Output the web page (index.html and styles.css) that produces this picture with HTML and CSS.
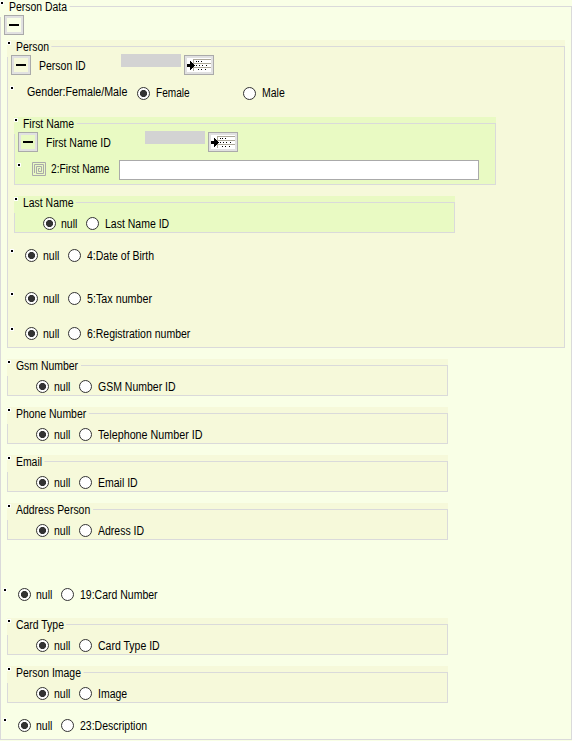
FILE: index.html
```html
<!DOCTYPE html>
<html lang="en">
<head>
<meta charset="utf-8">
<title>Person Data</title>
<link rel="stylesheet" href="styles.css">
</head>
<body>
<svg class="defs" width="0" height="0" aria-hidden="true">
  <symbol id="list" viewBox="0 0 30 20">
    <path d="M3 3H27V17H3Z" fill="#fff"/>
    <path d="M9.500 4V16M9 4.500H27M9 8.500H27M9 12.500H27" stroke="#aca899" fill="none"/>
    <path d="M12 6.500h1m1 0h1m2 0h1M12 10.500h1m2 0h1m2 0h1m3 0h1M14 14.500h1m2 0h1m3 0h1" stroke="#000" stroke-width="1.200"/>
    <path d="M3 9h3V6h1v1h1v1h1v1h1v1h1v1h-1v1h-1v1h-1v1h-1v1h-1v-3H3Z"/>
  </symbol>
</svg>
<main class="group root">
  <i class="dot"></i><h1 class="legend">Person Data</h1>
  <button class="toggle" aria-label="Collapse"></button>

  <section class="group person">
    <i class="dot"></i><h2 class="legend">Person</h2>
    <div class="head"><button class="toggle" aria-label="Collapse"></button><span class="t headtext">Person ID</span><span class="value"></span><button class="pick" aria-label="Pick"><svg width="30" height="20"><use href="#list"/></svg></button></div>
    <div class="gender"><i class="dot"></i><span class="t question">Gender:Female/Male</span><i class="radio on"></i><span class="t female">Female</span><i class="radio"></i><span class="t male">Male</span></div>

    <section class="group green first">
      <i class="dot"></i><h3 class="legend">First Name</h3>
      <div class="head"><button class="toggle" aria-label="Collapse"></button><span class="t headtext">First Name ID</span><span class="value"></span><button class="pick" aria-label="Pick"><svg width="30" height="20"><use href="#list"/></svg></button></div>
      <div class="entry"><i class="dot"></i>
        <svg class="spiral" width="14" height="14"><path d="M.5.5H13.500V13.500H.5ZM2.500 11V2.500H11.500V11.500H4.500V4.500H9.500V9.500H6.500V6.500H8" fill="none" stroke="#aaa"/></svg>
        <span class="t entrylabel">2:First Name</span><input class="field" aria-label="First Name"></div>
    </section>

    <section class="group green last">
      <i class="dot"></i><h3 class="legend">Last Name</h3>
      <div class="choice"><i class="radio on"></i><span class="t null">null</span><i class="radio"></i><span class="t name">Last Name ID</span></div>
    </section>

    <div class="choice item birth"><i class="dot"></i><i class="radio on"></i><span class="t null">null</span><i class="radio"></i><span class="t name">4:Date of Birth</span></div>
    <div class="choice item tax"><i class="dot"></i><i class="radio on"></i><span class="t null">null</span><i class="radio"></i><span class="t name">5:Tax number</span></div>
    <div class="choice item reg"><i class="dot"></i><i class="radio on"></i><span class="t null">null</span><i class="radio"></i><span class="t name">6:Registration number</span></div>
  </section>

  <section class="group small">
    <i class="dot"></i><h2 class="legend">Gsm Number</h2>
    <div class="choice"><i class="radio on"></i><span class="t null">null</span><i class="radio"></i><span class="t name">GSM Number ID</span></div>
  </section>
  <section class="group small">
    <i class="dot"></i><h2 class="legend">Phone Number</h2>
    <div class="choice"><i class="radio on"></i><span class="t null">null</span><i class="radio"></i><span class="t name wide">Telephone Number ID</span></div>
  </section>
  <section class="group small">
    <i class="dot"></i><h2 class="legend">Email</h2>
    <div class="choice"><i class="radio on"></i><span class="t null">null</span><i class="radio"></i><span class="t name">Email ID</span></div>
  </section>
  <section class="group small">
    <i class="dot"></i><h2 class="legend">Address Person</h2>
    <div class="choice"><i class="radio on"></i><span class="t null">null</span><i class="radio"></i><span class="t name">Adress ID</span></div>
  </section>
  <div class="choice item card"><i class="dot"></i><i class="radio on"></i><span class="t null">null</span><i class="radio"></i><span class="t name">19:Card Number</span></div>
  <section class="group small cardtype">
    <i class="dot"></i><h2 class="legend">Card Type</h2>
    <div class="choice"><i class="radio on"></i><span class="t null">null</span><i class="radio"></i><span class="t name">Card Type ID</span></div>
  </section>
  <section class="group small">
    <i class="dot"></i><h2 class="legend">Person Image</h2>
    <div class="choice"><i class="radio on"></i><span class="t null">null</span><i class="radio"></i><span class="t name">Image</span></div>
  </section>
  <div class="choice item desc"><i class="dot"></i><i class="radio on"></i><span class="t null">null</span><i class="radio"></i><span class="t name">23:Description</span></div>
</main>
</body>
</html>
```

FILE: styles.css
```css
* { box-sizing: border-box; }
body { margin: 0; height: 741px; background: #f9ffe6; color: #000; font: 12px/14px "Liberation Sans", Arial, sans-serif; overflow: hidden; }
.defs { position: absolute; }
h1, h2, h3 { margin: 0; font: inherit; }

/* Group frame: the top rule runs through the middle of the legend */
.group { position: relative; display: flow-root; --bg: #f6f9da; background: var(--bg); }
.group::before { content: ""; position: absolute; inset: 6px 0 0; border: 1px solid #dadada; pointer-events: none; }
.root { --bg: #f9ffe6; height: 740px; }
.legend { position: relative; width: fit-content; height: 17px; padding: 0 3px 0 10.300px; background: var(--bg); white-space: nowrap; transform: scaleX(.87); transform-origin: 0 0; }
.t { flex: none; display: block; white-space: nowrap; transform: scaleX(.875); transform-origin: 0 0; }
.dot { position: absolute; left: 1px; top: 2px; width: 2px; height: 2px; background: #000; box-shadow: 0 0 0 1px #fff; z-index: 1; }
.toggle { position: relative; display: block; flex: none; width: 20px; height: 20px; padding: 0; border: 1px solid #aaa; background: var(--bg); box-shadow: inset 0 0 0 2px #e1e1e1; }
.toggle::after { content: ""; position: absolute; left: 4px; top: 8px; width: 10px; height: 2px; background: #000; }
.root > .toggle { margin: -2px 0 0 4px; }

.person { width: 558px; height: 308px; margin: 5px 0 11px 7px; }
.head { position: relative; display: flex; height: 20px; margin: -2px 0 0 4px; }
.headtext { margin: 4px 0 0 8px; }
.value { width: 60px; height: 13px; background: #d3d3d3; margin: -1px 0 0 auto; }
.pick { flex: none; width: 30px; height: 20px; margin: 0 0 0 3px; padding: 0; border: 1px solid #aaa; background: #e1e1e1; }
.pick svg { display: block; margin: -1px; }
.person > .head { width: 203px; }
.first .head { width: 220px; }
.gender { position: relative; display: flex; align-items: center; height: 20px; margin-top: 8px; padding-left: 20px; }
.gender .dot { left: 4px; top: 4px; }
.question { width: 110px; margin-top: -3px; transform: scaleX(.89); }
.female { width: 87px; margin-left: 6px; transform: scaleX(.84); }
.male { margin-left: 6px; }
.radio { flex: none; width: 13px; height: 13px; border: 1px solid #333; border-radius: 50%; background: #fff; }
.on { background: radial-gradient(circle, #333 0 3.200px, #fff 3.900px); }

.green { --bg: #e9fac3; margin-left: 7px; }
.first { width: 482px; height: 68px; margin-top: 14px; }
.entry { position: relative; display: flex; align-items: center; height: 20px; margin-top: 8px; padding-left: 18px; }
.entry .dot { left: 4px; top: 4px; }
.spiral { margin-top: -2px; }
.entrylabel { width: 68px; margin: -2px 0 0 5px; transform: scaleX(.85); }
.field { width: 360px; height: 20px; padding: 0; border: 1px solid #aaa; background: #fff; }
.last { width: 441px; height: 37px; margin-top: 11px; }

.choice { position: relative; display: flex; align-items: center; height: 14px; margin-top: 3px; padding-left: 29px; }
.null { width: 25px; margin: 1px 0 0 5px; }
.name { margin: 1px 0 0 5.500px; }
.wide, .tax .name { transform: scaleX(.895); }
.item { padding-left: 18px; }
.item .dot { left: 4px; top: 2px; }
.birth { margin-top: 15px; }
.tax { margin-top: 29px; }
.reg { margin-top: 21px; }
.small { width: 441px; height: 37px; margin: 0 0 11px 7px; }
.card { margin-top: 47px; }
.cardtype { margin-top: 17px; }
.desc { margin-top: 15px; }
.desc .dot { top: 1px; }
```
